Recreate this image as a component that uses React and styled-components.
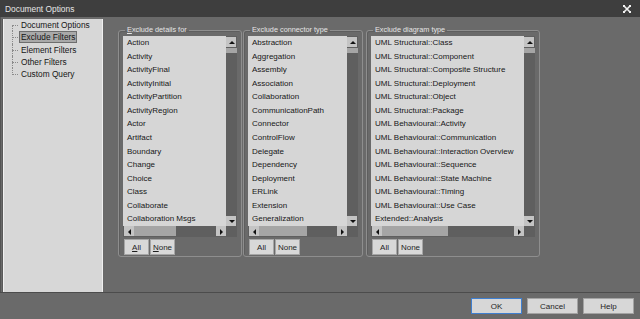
import React from "react";
import styled, { createGlobalStyle } from "styled-components";

const groups = [
  {
    title: "Exclude details for",
    accel: true,
    width: 124,
    gap: 0,
    thumb: 42,
    items: [
      "Action",
      "Activity",
      "ActivityFinal",
      "ActivityInitial",
      "ActivityPartition",
      "ActivityRegion",
      "Actor",
      "Artifact",
      "Boundary",
      "Change",
      "Choice",
      "Class",
      "Collaborate",
      "Collaboration Msgs",
    ],
  },
  {
    title: "Exclude connector type",
    width: 120,
    gap: 1,
    thumb: 48,
    items: [
      "Abstraction",
      "Aggregation",
      "Assembly",
      "Association",
      "Collaboration",
      "CommunicationPath",
      "Connector",
      "ControlFlow",
      "Delegate",
      "Dependency",
      "Deployment",
      "ERLink",
      "Extension",
      "Generalization",
    ],
  },
  {
    title: "Exclude diagram type",
    width: 174,
    gap: 3,
    thumb: 66,
    items: [
      "UML Structural::Class",
      "UML Structural::Component",
      "UML Structural::Composite Structure",
      "UML Structural::Deployment",
      "UML Structural::Object",
      "UML Structural::Package",
      "UML Behavioural::Activity",
      "UML Behavioural::Communication",
      "UML Behavioural::Interaction Overview",
      "UML Behavioural::Sequence",
      "UML Behavioural::State Machine",
      "UML Behavioural::Timing",
      "UML Behavioural::Use Case",
      "Extended::Analysis",
    ],
  },
];

const treeItems = [
  "Document Options",
  "Exclude Filters",
  "Element Filters",
  "Other Filters",
  "Custom Query",
];

const Arrow = ({ dir }) => {
  const pts = {
    up: "1,5 4,2 7,5",
    down: "1,2 4,5 7,2",
    left: "5,1 2,4 5,7",
    right: "2,1 5,4 2,7",
  };
  return (
    <svg width="7" height="7" viewBox="0 0 7 7">
      <polygon points={pts[dir]} fill="#111" />
    </svg>
  );
};

const App = () => {
  return (
    <Window>
      <GlobalStyle />
      <TitleBar>
        <span>Document Options</span>
        <CloseIcon width="8" height="8" viewBox="0 0 8 8">
          <path d="M1 1 L7 7 M7 1 L1 7" stroke="#f2f2f2" strokeWidth="1.6" />
          <rect x="0" y="0" width="2" height="2" fill="#f2f2f2" />
          <rect x="6" y="0" width="2" height="2" fill="#f2f2f2" />
          <rect x="0" y="6" width="2" height="2" fill="#f2f2f2" />
          <rect x="6" y="6" width="2" height="2" fill="#f2f2f2" />
        </CloseIcon>
      </TitleBar>
      <Body>
        <TreePanel>
          <Tree>
            {treeItems.map((t, i) => (
              <TreeItem key={t} first={i === 0} last={i === treeItems.length - 1}>
                <TreeLabel selected={t === "Exclude Filters"}>{t}</TreeLabel>
              </TreeItem>
            ))}
          </Tree>
        </TreePanel>
        <Content>
          {groups.map((g) => (
            <Group key={g.title} width={g.width} gap={g.gap}>
              <Legend>
                {g.accel ? (
                  <>
                    <u>E</u>
                    {g.title.slice(1)}
                  </>
                ) : (
                  g.title
                )}
              </Legend>
              <ListBox>
                <Items>
                  {g.items.map((it) => (
                    <Item key={it}>{it}</Item>
                  ))}
                </Items>
                <VScroll>
                  <ScrollBtn>
                    <Arrow dir="up" />
                  </ScrollBtn>
                  <VThumb />
                  <Track />
                  <ScrollBtn>
                    <Arrow dir="down" />
                  </ScrollBtn>
                </VScroll>
                <HScroll>
                  <ScrollBtn>
                    <Arrow dir="left" />
                  </ScrollBtn>
                  <HThumb style={{ width: g.thumb }} />
                  <Track />
                  <ScrollBtn>
                    <Arrow dir="right" />
                  </ScrollBtn>
                </HScroll>
                <Corner />
              </ListBox>
              <ButtonRow>
                <SmallButton>{g.accel ? <u>A</u> : "A"}ll</SmallButton>
                <SmallButton>{g.accel ? <u>N</u> : "N"}one</SmallButton>
              </ButtonRow>
            </Group>
          ))}
        </Content>
      </Body>
      <Footer>
        <DialogButton primary>OK</DialogButton>
        <DialogButton>Cancel</DialogButton>
        <DialogButton>Help</DialogButton>
      </Footer>
    </Window>
  );
};

export default App;

const GlobalStyle = createGlobalStyle`
  html, body {
    margin: 0;
    padding: 0;
    background: #6a6a6a;
  }
  body {
    font-family: "Liberation Sans", "DejaVu Sans", Arial, sans-serif;
    font-size: 8px;
  }
`;

const Window = styled.div`
  width: 640px;
  height: 319px;
  display: flex;
  flex-direction: column;
  background: #6a6a6a;
  overflow: hidden;
`;

const TitleBar = styled.div`
  height: 17px;
  flex: 0 0 17px;
  background: #3e3e3e;
  color: #e6e6e6;
  font-size: 8.4px;
  display: flex;
  align-items: center;
  justify-content: space-between;
  padding: 0 9px 0 5px;
  box-sizing: border-box;
`;

const CloseIcon = styled.svg`
  display: block;
`;

const Body = styled.div`
  flex: 1;
  display: flex;
  padding: 2px 0 0 2px;
  border-left: 1px solid #545454;
  min-height: 0;
`;

const TreePanel = styled.div`
  width: 100px;
  box-sizing: border-box;
  background: #d7d7d7;
  border-left: 1px solid #f0f0f0;
  border-right: 1px solid #f0f0f0;
  box-shadow: -1px 0 0 #5a5a5a;
`;

const Tree = styled.ul`
  list-style: none;
  margin: 0;
  padding: 0 0 0 8px;
`;

const TreeItem = styled.li`
  position: relative;
  height: 12.25px;
  display: flex;
  align-items: center;
  padding-left: 7px;
  color: #151515;
  font-size: 8.3px;
  &::before {
    content: "";
    position: absolute;
    left: 0;
    top: 6px;
    width: 6px;
    border-top: 1px dotted #8a8a8a;
  }
  &::after {
    content: "";
    position: absolute;
    left: 0;
    top: ${({ first }) => (first ? "6px" : "0")};
    height: ${({ first, last }) => (last ? "7px" : first ? "6.25px" : "12.25px")};
    border-left: 1px dotted #8a8a8a;
  }
`;

const TreeLabel = styled.span`
  padding: 0 1px;
  line-height: 10px;
  border: 1px solid ${({ selected }) => (selected ? "#6e6e6e" : "transparent")};
  background: ${({ selected }) => (selected ? "#a9a9a9" : "transparent")};
`;

const Content = styled.div`
  display: flex;
  align-items: flex-start;
  margin-left: 15px;
  padding-top: 5px;
`;

const Group = styled.fieldset`
  width: ${({ width }) => width}px;
  box-sizing: border-box;
  margin: 0 0 0 ${({ gap }) => gap}px;
  padding: 0 4px 1px;
  border: 1px solid #8e8e8e;
  border-radius: 3px;
  box-shadow: inset 1px 1px 0 #5e5e5e;
`;

const Legend = styled.legend`
  margin-left: 2px;
  padding: 0 2px;
  color: #e6e6e6;
  font-size: 7.3px;
  line-height: 12px;
`;

const ListBox = styled.div`
  display: grid;
  grid-template-columns: 1fr 11px;
  grid-template-rows: 190px 11px;
  background: #d6d6d6;
`;

const Items = styled.ul`
  list-style: none;
  margin: 0;
  padding: 0 0 0 4px;
  overflow: hidden;
`;

const Item = styled.li`
  height: 13.57px;
  line-height: 13.57px;
  color: #161616;
  white-space: nowrap;
`;

const VScroll = styled.div`
  display: flex;
  flex-direction: column;
  background: #5f5f5f;
  padding-top: 1px;
`;

const HScroll = styled.div`
  display: flex;
  background: #5f5f5f;
  padding-left: 1px;
`;

const ScrollBtn = styled.div`
  flex: 0 0 10px;
  height: 10px;
  width: 10px;
  display: flex;
  align-items: center;
  justify-content: center;
  background: #c4c4c4;
`;

const Track = styled.div`
  flex: 1;
`;

const VThumb = styled.div`
  height: 5px;
  margin-top: 1px;
  background: #a5a5a5;
`;

const HThumb = styled.div`
  height: 10px;
  background: #a5a5a5;
`;

const Corner = styled.div`
  background: #5f5f5f;
`;

const ButtonRow = styled.div`
  display: flex;
  gap: 1px;
  margin-top: 2px;
  padding-left: 1px;
`;

const SmallButton = styled.button`
  width: 25px;
  height: 16px;
  padding: 0;
  font-family: inherit;
  font-size: 8px;
  color: #1e1e1e;
  background: #d8d8d8;
  border: 1px solid #a6a6a6;
  border-radius: 0;
`;

const Footer = styled.div`
  height: 27px;
  flex: 0 0 27px;
  box-sizing: border-box;
  border-top: 1px solid #4c4c4c;
  display: flex;
  align-items: center;
  justify-content: flex-end;
  gap: 5px;
  padding-right: 6px;
`;

const DialogButton = styled.button`
  width: 51px;
  height: 16px;
  padding: 0;
  font-family: inherit;
  font-size: 8px;
  color: #1e1e1e;
  background: #d7d7d7;
  border: 1px solid ${({ primary }) => (primary ? "#3f7fd0" : "#a3a3a3")};
  border-radius: 0;
`;
